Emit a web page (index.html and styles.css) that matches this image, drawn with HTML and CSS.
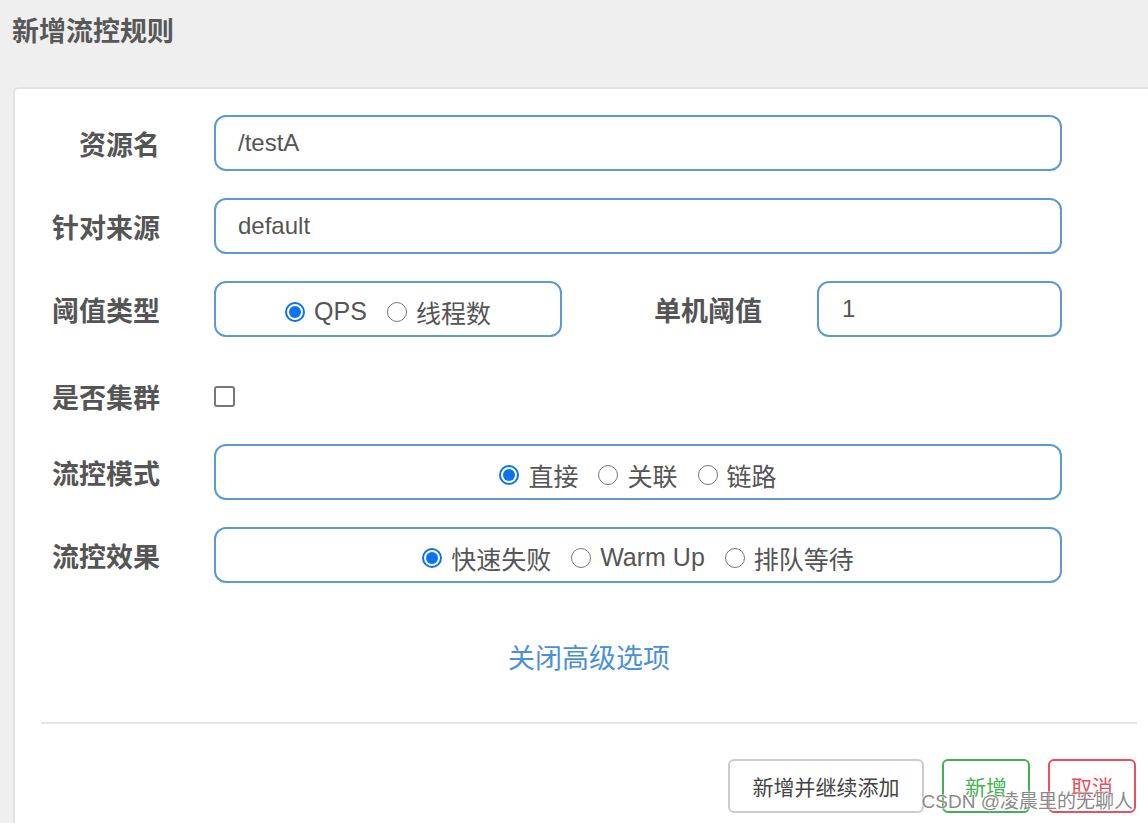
FILE: index.html
```html
<!DOCTYPE html>
<html lang="zh-CN">
<head>
<meta charset="utf-8">
<title>新增流控规则</title>
<link rel="stylesheet" href="styles.css">
</head>
<body>
<h1 class="title">新增流控规则</h1>
<div class="card">
  <div class="row">
    <div class="label">资源名</div>
    <div class="field full">/testA</div>
  </div>
  <div class="row">
    <div class="label">针对来源</div>
    <div class="field full">default</div>
  </div>
  <div class="row">
    <div class="label">阈值类型</div>
    <div class="field box small">
      <span class="opt"><span class="radio on"></span>QPS</span>
      <span class="opt"><span class="radio"></span>线程数</span>
    </div>
    <div class="label wide">单机阈值</div>
    <div class="field count">1</div>
  </div>
  <div class="row check-row">
    <div class="label">是否集群</div>
    <span class="checkbox"></span>
  </div>
  <div class="row">
    <div class="label">流控模式</div>
    <div class="field box full">
      <span class="opt"><span class="radio on"></span>直接</span>
      <span class="opt"><span class="radio"></span>关联</span>
      <span class="opt"><span class="radio"></span>链路</span>
    </div>
  </div>
  <div class="row">
    <div class="label">流控效果</div>
    <div class="field box full">
      <span class="opt"><span class="radio on"></span>快速失败</span>
      <span class="opt"><span class="radio"></span>Warm Up</span>
      <span class="opt"><span class="radio"></span>排队等待</span>
    </div>
  </div>
  <div class="toggle">关闭高级选项</div>
  <div class="divider"></div>
  <div class="actions">
    <button class="btn">新增并继续添加</button>
    <button class="btn green">新增</button>
    <button class="btn red">取消</button>
  </div>
</div>
<div class="watermark">CSDN @凌晨里的无聊人</div>
</body>
</html>
```
FILE: styles.css
```css
html, body {
  margin: 0;
  padding: 0;
}
body {
  background: #efefef;
  overflow: hidden;
  height: 823px;
  position: relative;
  font-family: "Liberation Sans", "Noto Sans CJK SC", sans-serif;
  color: #555;
}
.title {
  margin: 0;
  padding: 13px 12px 0;
  font-size: 27px;
  line-height: 34px;
  font-weight: bold;
  color: #585858;
  font-family: "Noto Sans CJK SC", sans-serif;
}
.card {
  margin-top: 40px;
  margin-left: 13px;
  width: 1152px;
  box-sizing: border-box;
  background: #fff;
  border: 2px solid #e2e2e2;
  border-radius: 6px;
  padding: 26px 26px 40px;
}
.row {
  display: flex;
  align-items: center;
  height: 56px;
  margin-bottom: 27px;
}
.label {
  width: 119px;
  margin-right: 54px;
  text-align: right;
  font-size: 27px;
  font-weight: bold;
  color: #555;
  font-family: "Noto Sans CJK SC", sans-serif;
  white-space: nowrap;
}
.label.wide {
  width: 200px;
  margin-right: 55px;
}
.field {
  height: 56px;
  box-sizing: border-box;
  border: 2px solid #5b9bd5;
  border-radius: 12px;
  font-size: 24px;
  color: #555;
  display: flex;
  align-items: center;
  padding-left: 22px;
}
.field.full {
  width: 848px;
}
.field.small {
  width: 348px;
}
.field.count {
  width: 245px;
  padding-left: 23px;
}
.field.box {
  justify-content: center;
  padding: 5px 0 0;
}
.opt {
  display: inline-flex;
  align-items: center;
  font-size: 25px;
  color: #555;
  margin-left: 20px;
}
.opt:first-child {
  margin-left: 0;
}
.radio {
  width: 20px;
  height: 20px;
  box-sizing: border-box;
  border: 1.5px solid #777;
  border-radius: 50%;
  margin-right: 9px;
  position: relative;
}
.radio.on {
  border: 2px solid #0b72f0;
}
.radio.on::after {
  content: "";
  position: absolute;
  left: 2px;
  top: 2px;
  width: 12px;
  height: 12px;
  border-radius: 50%;
  background: #0b72f0;
}
.check-row {
  height: 53px;
  padding-top: 11px;
  box-sizing: border-box;
}
.checkbox {
  width: 21px;
  height: 21px;
  box-sizing: border-box;
  border: 2px solid #777;
  border-radius: 3px;
}
.toggle {
  margin-top: 60px;
  text-align: center;
  font-size: 27px;
  line-height: 28px;
  color: #4a90d9;
  font-family: "Noto Sans CJK SC", sans-serif;
}
.divider {
  margin-top: 51px;
  height: 2px;
  background: #e6e6e6;
}
.actions {
  margin-top: 35px;
  display: flex;
  justify-content: flex-end;
  gap: 18px;
  padding-right: 1px;
}
.btn {
  height: 54px;
  box-sizing: border-box;
  border: 2px solid #ccc;
  border-radius: 6px;
  background: #fff;
  font-family: "Noto Sans CJK SC", sans-serif;
  font-size: 21px;
  color: #444;
  padding: 0;
  width: 88px;
}
.btn:first-child {
  width: 196px;
}
.btn.green {
  border-color: #3fb34f;
  color: #3fb34f;
}
.btn.red {
  border-color: #e8505b;
  color: #e8505b;
}
.watermark {
  position: absolute;
  right: 15px;
  bottom: 10px;
  font-size: 19px;
  line-height: 22px;
  color: #8a8a8a;
  text-shadow: 0 0 2px #fff, 0 0 2px #fff;
  white-space: nowrap;
}
```
